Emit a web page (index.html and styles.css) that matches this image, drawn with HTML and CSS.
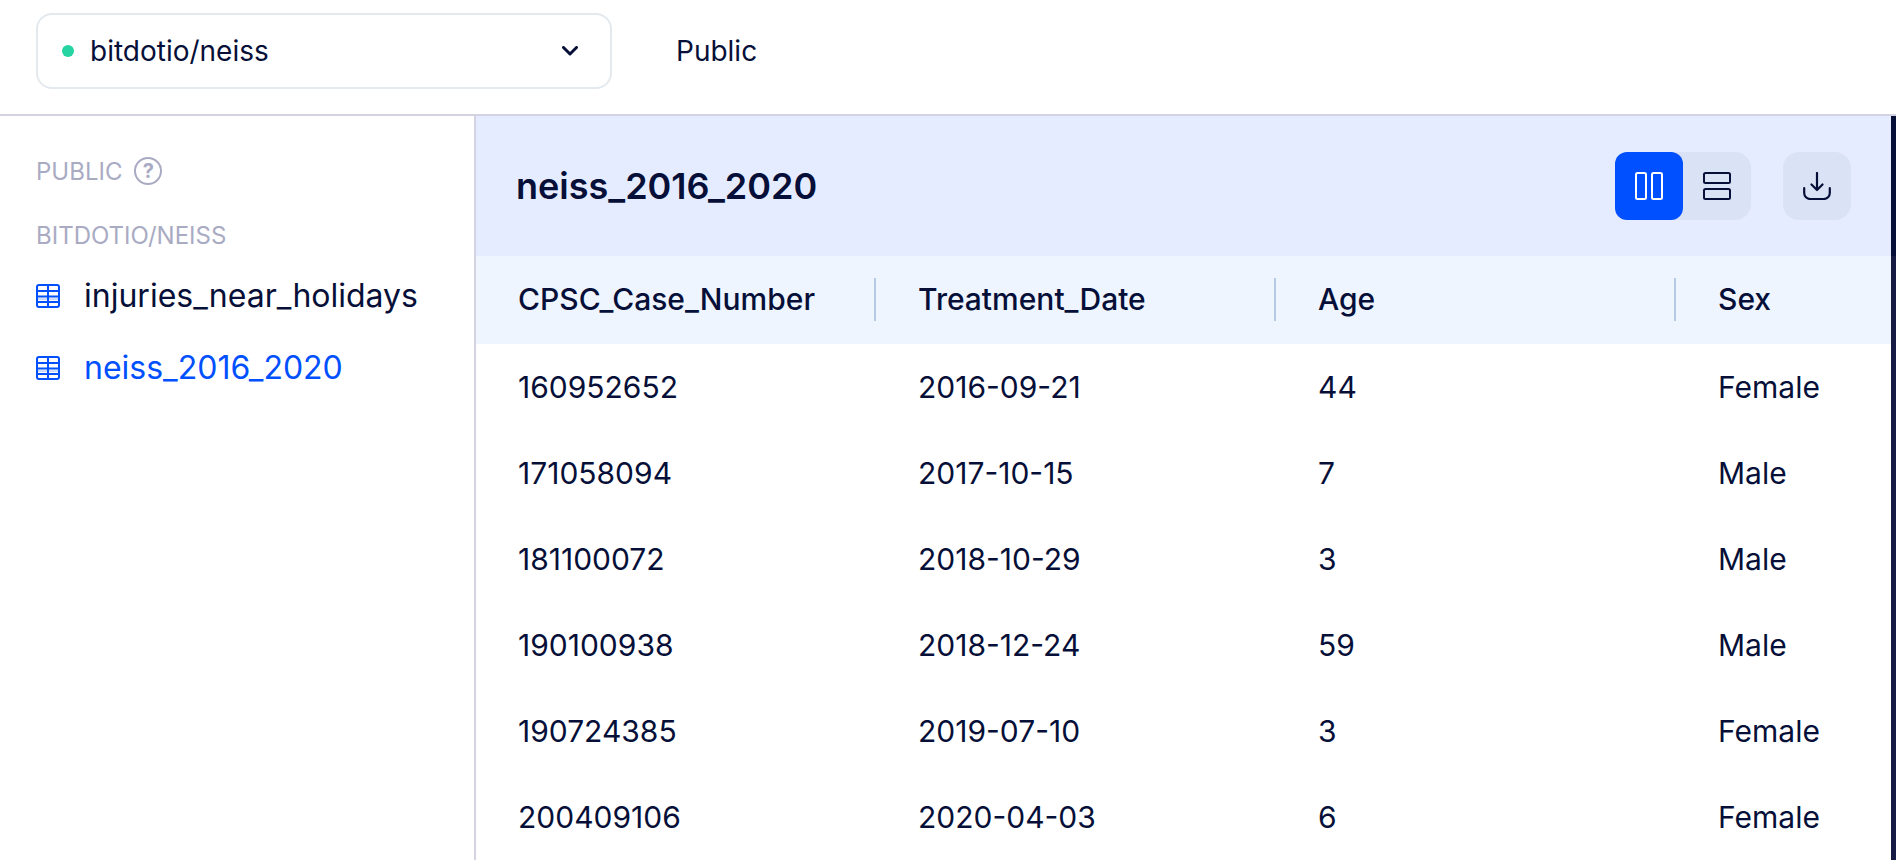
FILE: index.html
```html
<!DOCTYPE html>
<html lang="en">
<head>
<meta charset="utf-8">
<meta name="viewport" content="width=device-width, initial-scale=1">
<title>bitdotio/neiss</title>
<link rel="stylesheet" href="styles.css">
</head>
<body>
<div class="app">
  <header class="topbar">
    <div class="repo-picker">
      <span class="status-dot"></span>
      <select class="repo-select" aria-label="Repository">
        <option>bitdotio/neiss</option>
      </select>
      <svg class="chevron" width="16" height="10" viewBox="0 0 16 10" fill="none" stroke="currentColor" stroke-width="3" stroke-linecap="round" stroke-linejoin="round" aria-hidden="true"><path d="M1.5 1.5 8 8l6.500-6.500"/></svg>
    </div>
    <span class="visibility">Public</span>
  </header>
  <div class="body">
    <nav class="sidebar" aria-label="Tables">
      <div class="group">
        <span>PUBLIC</span>
        <button class="help" type="button" aria-label="About public repositories">?</button>
      </div>
      <div class="group group-name">BITDOTIO/NEISS</div>
      <ul class="tables">
        <li><a class="table-link" href="#injuries">
          <svg class="table-icon" width="24" height="24" viewBox="0 0 24 24" fill="none" stroke="currentColor" stroke-width="2" aria-hidden="true"><path stroke-opacity="0.2" d="M1 15h22"/><rect x="1" y="1" width="22" height="22" rx="2"/><path d="M12 1v22M1 7h22M1 12.500h22M1 18h22"/></svg>
          <span>injuries_near_holidays</span></a></li>
        <li><a class="table-link current" href="#neiss" aria-current="page">
          <svg class="table-icon" width="24" height="24" viewBox="0 0 24 24" fill="none" stroke="currentColor" stroke-width="2" aria-hidden="true"><path stroke-opacity="0.2" d="M1 15h22"/><rect x="1" y="1" width="22" height="22" rx="2"/><path d="M12 1v22M1 7h22M1 12.500h22M1 18h22"/></svg>
          <span>neiss_2016_2020</span></a></li>
      </ul>
    </nav>
    <main class="content">
      <div class="content-head">
        <h1 class="title">neiss_2016_2020</h1>
        <div class="actions">
          <div class="toggle">
            <button class="icon-button active" type="button" aria-label="Column layout" aria-pressed="true">
              <svg width="28" height="28" viewBox="0 0 28 28" fill="none" stroke="currentColor" stroke-width="2" aria-hidden="true"><rect x="1" y="1" width="10" height="26" rx="1.500"/><rect x="17" y="1" width="10" height="26" rx="1.500"/></svg>
            </button>
            <button class="icon-button" type="button" aria-label="Row layout" aria-pressed="false">
              <svg width="28" height="28" viewBox="0 0 28 28" fill="none" stroke="currentColor" stroke-width="2" aria-hidden="true"><rect x="1" y="1" width="26" height="10" rx="1.500"/><rect x="1" y="17" width="26" height="10" rx="1.500"/></svg>
            </button>
          </div>
          <button class="icon-button download" type="button" aria-label="Download">
            <svg width="28" height="28" viewBox="0 0 28 28" fill="none" stroke="currentColor" stroke-width="2.200" stroke-linecap="round" stroke-linejoin="round" aria-hidden="true"><path d="M14 1v17M8.500 12.500 14 18 19.500 12.500M1.200 16v5a6 6 0 0 0 6 6h13.600a6 6 0 0 0 6-6v-5"/></svg>
          </button>
        </div>
      </div>
      <div class="grid-scroll">
        <table class="grid">
          <thead>
            <tr><th scope="col"><div class="head-cell">CPSC_Case_Number</div></th><th scope="col"><div class="head-cell">Treatment_Date</div></th><th scope="col"><div class="head-cell">Age</div></th><th scope="col"><div class="head-cell">Sex</div></th></tr>
          </thead>
          <tbody>
            <tr><td>160952652</td><td>2016-09-21</td><td>44</td><td>Female</td></tr>
            <tr><td>171058094</td><td>2017-10-15</td><td>7</td><td>Male</td></tr>
            <tr><td>181100072</td><td>2018-10-29</td><td>3</td><td>Male</td></tr>
            <tr><td>190100938</td><td>2018-12-24</td><td>59</td><td>Male</td></tr>
            <tr><td>190724385</td><td>2019-07-10</td><td>3</td><td>Female</td></tr>
            <tr><td>200409106</td><td>2020-04-03</td><td>6</td><td>Female</td></tr>
          </tbody>
        </table>
      </div>
    </main>
    <div class="edge"></div>
  </div>
</div>
</body>
</html>
```
FILE: styles.css
```css
:root {
  --ink: #060f38;
  --blue: #0050ff;
  --muted: #a9abc3;
  --line: #d4d3e2;
}
* { box-sizing: border-box; }
body {
  margin: 0;
  background: #fff;
  color: var(--ink);
  font-family: Inter, "Liberation Sans", sans-serif;
}
button, select { font: inherit; color: inherit; }
.app {
  display: flex;
  flex-direction: column;
  height: 100vh;
  overflow: hidden;
}
.topbar {
  display: flex;
  align-items: center;
  gap: 64px;
  padding: 13px 36px 25px;
  border-bottom: 2px solid var(--line);
  font-size: 28px;
}
.repo-picker {
  position: relative;
  width: 576px;
}
.repo-select {
  appearance: none;
  display: block;
  width: 100%;
  height: 76px;
  padding: 0 64px 0 52px;
  border: 2px solid #e4e9ee;
  border-radius: 16px;
  background: transparent;
}
.status-dot {
  position: absolute;
  left: 26px;
  top: 32px;
  width: 12px;
  height: 12px;
  border-radius: 50%;
  background: #25d4a2;
}
.chevron {
  position: absolute;
  right: 34px;
  top: 33px;
  pointer-events: none;
}
.body {
  display: flex;
  flex: 1;
  min-height: 0;
}
.sidebar {
  flex: none;
  width: 476px;
  padding: 39px 36px;
  border-right: 2px solid var(--line);
}
.group {
  display: flex;
  align-items: center;
  gap: 12px;
  height: 32px;
  margin-bottom: 32px;
  color: var(--muted);
  font-size: 24px;
}
.group-name { margin-bottom: 25px; }
.help {
  width: 28px;
  height: 28px;
  padding: 0;
  border: 2px solid currentColor;
  border-radius: 50%;
  background: none;
  font-size: 20px;
  font-weight: 700;
  line-height: 24px;
}
.tables {
  display: grid;
  gap: 32px;
  margin: 0;
  padding: 0;
  list-style: none;
}
.table-link {
  display: flex;
  align-items: center;
  gap: 24px;
  color: inherit;
  font-size: 32px;
  line-height: 40px;
  text-decoration: none;
}
.table-icon { flex: none; color: var(--blue); }
.current { color: var(--blue); }
.content {
  flex: 1;
  min-width: 0;
  overflow: hidden;
}
.content-head {
  display: flex;
  align-items: center;
  justify-content: space-between;
  height: 140px;
  padding: 0 40px;
  background: #e6ecff;
}
.title { margin: 0; font-size: 36px; font-weight: 600; }
.actions { display: flex; gap: 32px; }
.toggle {
  display: flex;
  border-radius: 16px;
  background: #dae2f5;
}
.icon-button {
  display: grid;
  place-items: center;
  width: 68px;
  height: 68px;
  padding: 0;
  border: 0;
  border-radius: 12px;
  background: none;
}
.icon-button.active { background: var(--blue); color: #fff; }
.icon-button.download { border-radius: 16px; background: #dae2f5; }
.grid-scroll { overflow: hidden; }
.grid {
  width: 1600px;
  table-layout: fixed;
  border-collapse: collapse;
  font-size: 30px;
}
.grid th, .grid td { text-align: left; font-weight: 400; }
.grid th {
  height: 88px;
  padding: 0 0 2px;
  background: #eef5ff;
}
.grid td { height: 86px; padding: 0 42px; }
.grid .head-cell {
  padding: 0 42px;
  border-right: 2px solid #b5cae4;
  font-weight: 500;
  line-height: 43px;
}
.edge {
  flex: none;
  width: 5px;
  background: linear-gradient(#060f38 140px, #161b43 140px);
}
```
